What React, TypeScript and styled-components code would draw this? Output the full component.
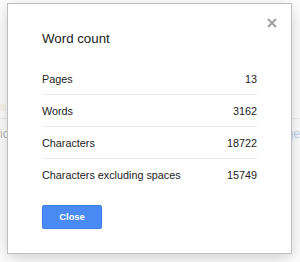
import React from "react";
import styled, { createGlobalStyle } from "styled-components";

const GlobalStyle = createGlobalStyle`
	html, body {
		margin: 0;
		padding: 0;
		background: #fff;
	}
	body {
		font-family: "Liberation Sans", Arial, sans-serif;
		overflow: hidden;
	}
`;

const Page = styled.div`
	position: relative;
	width: 300px;
	height: 262px;
	overflow: hidden;
	background: #fff;
`;

const Backdrop = styled.div`
	padding-top: 104px;
	opacity: 0.35;
`;

const BackMark = styled.div`
	width: 6px;
	height: 7px;
	background: #e8dcb0;
	opacity: 0.6;
`;

const BackRule = styled.div`
	margin-top: 7px;
	border-bottom: 1px solid #ccc;
`;

const BackLine = styled.div`
	display: flex;
	justify-content: space-between;
	align-items: center;
	padding-top: 8px;
	height: 14px;
	line-height: 14px;
`;

const BackText = styled.span<{ $tone?: string }>`
	font-size: 12px;
	color: ${(p) => p.$tone || "#444"};
`;

const Dialog = styled.div`
	position: absolute;
	top: 3px;
	left: 7px;
	box-sizing: border-box;
	width: 285px;
	padding: 27px 34px 24px;
	background: #fff;
	border: 1px solid rgba(0, 0, 0, 0.25);
	box-shadow: 0 4px 16px rgba(0, 0, 0, 0.2);
	color: #222;
`;

const CloseX = styled.button`
	position: absolute;
	top: 14px;
	right: 14px;
	width: 10px;
	height: 10px;
	padding: 0;
	border: 0;
	background: none;
	display: flex;
	cursor: pointer;
`;

const Title = styled.h2`
	margin: 0 0 16px;
	font-size: 13.3px;
	line-height: 16px;
	font-weight: 400;
	color: #222;
`;

const Table = styled.div`
	display: flex;
	flex-direction: column;
`;

const Row = styled.div<{ $last?: boolean }>`
	display: flex;
	justify-content: space-between;
	align-items: center;
	box-sizing: border-box;
	height: 32px;
	font-size: 10.8px;
	border-bottom: ${(p) => (p.$last ? "none" : "1px solid #ebebeb")};
`;

const Footer = styled.div`
	display: flex;
	margin-top: 14px;
`;

const Button = styled.button`
	box-sizing: border-box;
	width: 60px;
	height: 24px;
	padding: 0;
	border: 1px solid #3b7ee8;
	border-radius: 2px;
	background: #4a8af4;
	color: #fff;
	font-family: "Liberation Sans", Arial, sans-serif;
	font-size: 9.3px;
	font-weight: 700;
	cursor: pointer;
`;

const stats = [
	{ label: "Pages", value: 13 },
	{ label: "Words", value: 3162 },
	{ label: "Characters", value: 18722 },
	{ label: "Characters excluding spaces", value: 15749 }
];

export default function App() {
	return (
		<Page>
			<GlobalStyle />
			<Backdrop>
				<BackMark />
				<BackRule />
				<BackLine>
					<BackText>ic</BackText>
					<BackText $tone="#4a7fd8">ge</BackText>
				</BackLine>
			</Backdrop>
			<Dialog>
				<CloseX aria-label="Close">
					<svg width="10" height="10" viewBox="0 0 10 10">
						<path d="M1 1 L9 9 M9 1 L1 9" stroke="#a3a3a3" strokeWidth="2.2" />
					</svg>
				</CloseX>
				<Title>Word count</Title>
				<Table>
					{stats.map((s, i) => (
						<Row key={s.label} $last={i === stats.length - 1}>
							<span>{s.label}</span>
							<span>{s.value}</span>
						</Row>
					))}
				</Table>
				<Footer>
					<Button>Close</Button>
				</Footer>
			</Dialog>
		</Page>
	);
}
